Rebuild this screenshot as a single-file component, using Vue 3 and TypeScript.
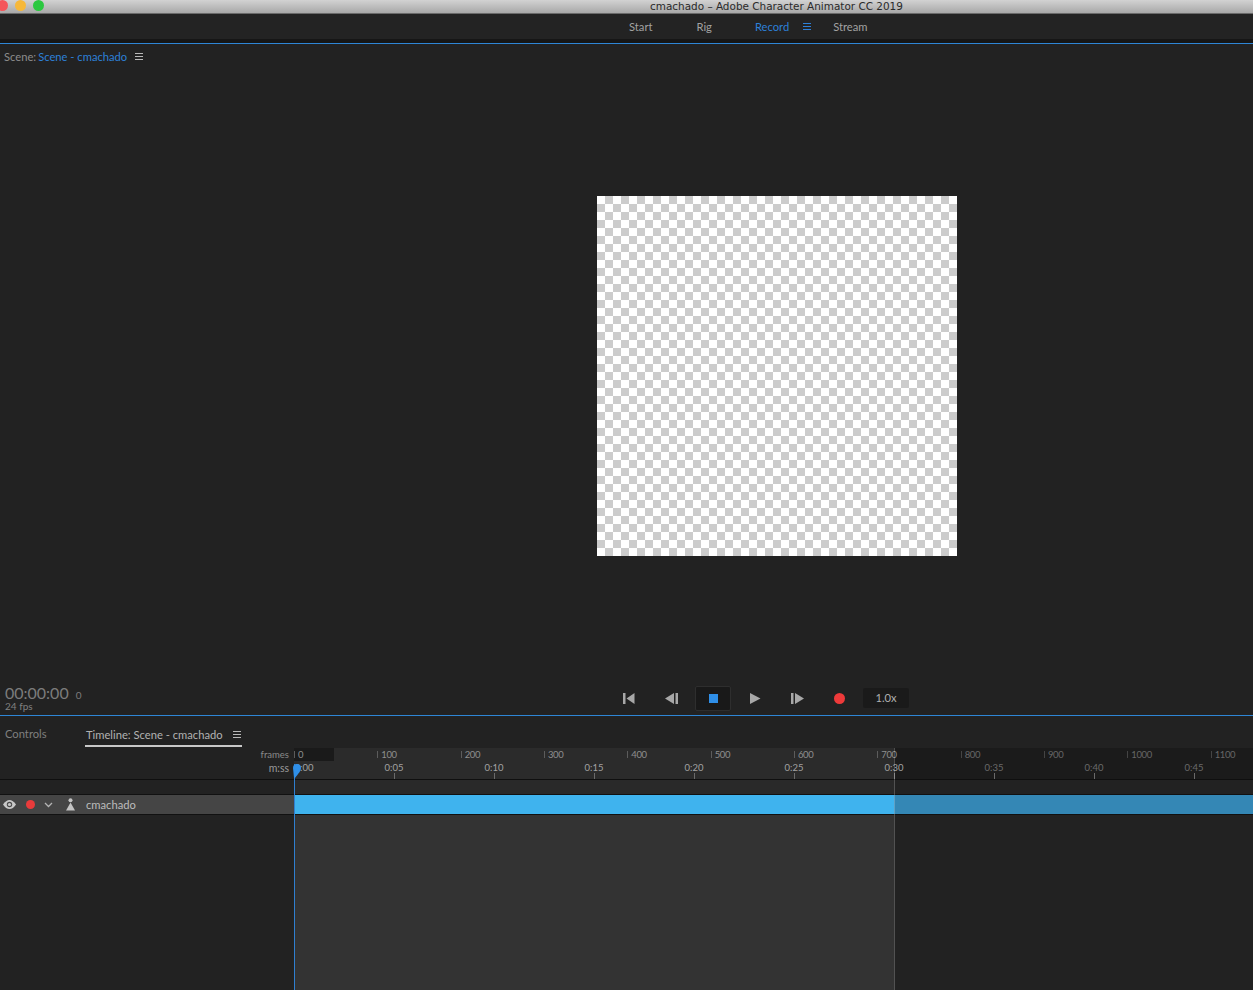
<script setup lang="ts">
import { computed } from 'vue';

const PX_PER_FRAME = 100 / 120;

// frame labels along the top ruler
const frameMarks = computed(() =>
  Array.from({ length: 12 }, (_, i) => ({
    label: String(i * 100),
    left: i * 100 * PX_PER_FRAME,
    dim: i > 7
  }))
);

// m:ss labels, one every 5 seconds
const timeMarks = computed(() =>
  Array.from({ length: 10 }, (_, i) => ({
    label: `0:${String(i * 5).padStart(2, '0')}`,
    left: i * 100,
    dim: i > 6
  }))
);
</script>

<template>
  <div class="app">
    <div class="titlebar">
      <div class="lights">
        <span class="light red"></span>
        <span class="light yellow"></span>
        <span class="light green"></span>
      </div>
      <span class="title">cmachado – Adobe Character Animator CC 2019</span>
    </div>

    <nav class="nav">
      <span class="nav-item start">Start</span>
      <span class="nav-item rig">Rig</span>
      <span class="nav-item record">Record</span>
      <span class="burger blue"><i></i><i></i><i></i></span>
      <span class="nav-item stream">Stream</span>
    </nav>

    <section class="scene">
      <div class="rule"></div>
      <header class="scene-head">
        <span class="scene-label">Scene:</span>
        <span class="scene-name">Scene - cmachado</span>
        <span class="burger"><i></i><i></i><i></i></span>
      </header>
      <div class="stage">
        <div class="checker"></div>
      </div>
      <footer class="transport">
        <div class="clock">
          <div class="clock-line"><span class="timecode">00:00:00</span><span class="frame-no">0</span></div>
          <div class="fps">24 fps</div>
        </div>
        <div class="controls">
          <svg class="ctl first" width="12" height="11" viewBox="0 0 12 11"><path d="M0 0h2.500v11H0zM11.500 0v11L3.500 5.500z" /></svg>
          <svg class="ctl back" width="13" height="11" viewBox="0 0 13 11"><path d="M9 0v11L0 5.500zM10.500 0H13v11h-2.500z" /></svg>
          <button class="stop"><span></span></button>
          <svg class="ctl play" width="11" height="11" viewBox="0 0 11 11"><path d="M0 0v11l10.500-5.500z" /></svg>
          <svg class="ctl fwd" width="13" height="11" viewBox="0 0 13 11"><path d="M0 0h2.500v11H0zM4 0v11l9-5.500z" /></svg>
          <span class="rec-dot"></span>
          <span class="speed">1.0x</span>
        </div>
      </footer>
      <div class="rule"></div>
    </section>

    <section class="timeline">
      <div class="tabs">
        <span class="tab-controls">Controls</span>
        <span class="tab-active">
          <span class="tab-text">Timeline: Scene - cmachado</span>
          <span class="burger"><i></i><i></i><i></i></span>
        </span>
      </div>

      <div class="ruler-row">
        <div class="ruler-names">
          <div>frames</div>
          <div class="mss">m:ss</div>
        </div>
        <div class="ruler">
          <div class="ruler-past"></div>
          <div class="frame-zero"></div>
          <span
            v-for="m in frameMarks"
            :key="m.label"
            class="frame-mark"
            :class="{ dim: m.dim }"
            :style="{ left: `${m.left}px` }"
          >{{ m.label }}</span>
          <span
            v-for="(m, i) in timeMarks"
            :key="m.label"
            class="time-mark"
            :class="{ dim: m.dim, first: i === 0 }"
            :style="{ left: `${m.left}px` }"
          >{{ m.label }}</span>
          <i
            v-for="m in timeMarks.slice(1)"
            :key="m.label"
            class="time-tick"
            :style="{ left: `${m.left}px` }"
          ></i>
        </div>
      </div>

      <div class="spacer-row">
        <div class="spacer-past"></div>
      </div>

      <div class="track-row">
        <div class="track-head">
          <svg width="13" height="9" viewBox="0 0 13 9" class="eye">
            <path d="M0 4.500C2 1.500 4.200 0 6.500 0S11 1.500 13 4.500C11 7.500 8.800 9 6.500 9S2 7.500 0 4.500z" fill="#c8c8c8" />
            <circle cx="6.500" cy="4.500" r="2.700" fill="#4a4a4a" />
            <circle cx="6.500" cy="4.500" r="1.600" fill="#c8c8c8" />
          </svg>
          <span class="track-rec"></span>
          <svg width="9" height="6" viewBox="0 0 9 6" class="chev">
            <path d="M1 1l3.500 3.500L8 1" fill="none" stroke="#b4b4b4" stroke-width="1.300" />
          </svg>
          <svg width="9" height="13" viewBox="0 0 9 13" class="puppet">
            <circle cx="4.500" cy="2.200" r="2" fill="#c4c4c4" />
            <path d="M4.500 4.500L9 12.500H0z" fill="#c4c4c4" />
          </svg>
          <span class="track-name">cmachado</span>
        </div>
        <div class="track-bar">
          <div class="bar-live"></div>
          <div class="bar-rest"></div>
        </div>
      </div>

      <div class="lane">
        <div class="lane-head"></div>
        <div class="lane-past"></div>
        <div class="lane-rest"></div>
      </div>

      <div class="end-line"></div>
      <div class="playhead">
        <svg width="8" height="14" viewBox="0 0 8 14">
          <path d="M0 4a4 4 0 0 1 8 0c0 3-3 6-6 10L1 14z" fill="#2f8fe8" />
        </svg>
      </div>
    </section>
  </div>
</template>

<style scoped>
.app {
  width: 1253px;
  height: 990px;
  display: flex;
  flex-direction: column;
  overflow: hidden;
  background: #222222;
  color: #a0a0a0;
  font-family: Lato, "Open Sans", sans-serif;
  font-size: 11.2px;
}

.titlebar {
  height: 13px;
  flex: none;
  position: relative;
  overflow: hidden;
  background: linear-gradient(#d2d2d2, #a8a8a8);
  border-bottom: 1px solid #6a6a6a;
}

.lights {
  display: flex;
  gap: 7px;
  margin-left: -3px;
}

.light {
  width: 11px;
  height: 11px;
  border-radius: 50%;
}

.red { background: #f5565a; }
.yellow { background: #f6b83a; }
.green { background: #2cc840; }

.title {
  position: absolute;
  left: 650px;
  top: 0;
  color: #2a2a2a;
  font: 10.45px/13px "DejaVu Sans", sans-serif;
  white-space: nowrap;
}

.nav {
  height: 25px;
  flex: none;
  display: flex;
  align-items: center;
  padding-left: 629px;
  background: #232323;
  color: #a2a2a2;
}

.nav-item { line-height: 25px; }
.rig { margin-left: 44px; }
.record { margin-left: 43px; color: #2d80d8; }
.nav .burger { margin-left: 14px; margin-right: 22px; }

.burger {
  display: inline-flex;
  flex-direction: column;
  justify-content: space-between;
  width: 8px;
  height: 7px;
  flex: none;
}

.burger i {
  display: block;
  height: 1px;
  background: #b8b8b8;
}

.burger.blue i { background: #2d80d8; }

.scene {
  height: 677px;
  flex: none;
  display: flex;
  flex-direction: column;
  border-top: 4px solid #161616;
  box-sizing: border-box;
}

.rule {
  height: 1px;
  flex: none;
  background: #2e86d6;
}

.scene-head {
  height: 25px;
  flex: none;
  display: flex;
  align-items: center;
  padding-left: 4px;
  box-sizing: border-box;
}

.scene-label { color: #8c8c8c; }
.scene-name { margin-left: 2px; color: #2d80d8; }
.scene-head .burger { margin-left: 8px; }

.stage {
  flex: 1;
  display: flex;
  padding: 127px 0 0 597px;
}

.checker {
  width: 360px;
  height: 360px;
  background-image: conic-gradient(
    #cccccc 25%, #ffffff 0 50%, #cccccc 0 75%, #ffffff 0
  );
  background-size: 16px 16px;
}

.transport {
  height: 44px;
  flex: none;
  display: flex;
  padding-top: 13px;
  box-sizing: border-box;
}

.clock {
  width: 623px;
  flex: none;
  padding-left: 5px;
  box-sizing: border-box;
}

.clock-line {
  display: flex;
  align-items: baseline;
  height: 17px;
  color: #7c7c7c;
}

.timecode {
  font-size: 16px;
  line-height: 17px;
}

.frame-no {
  margin-left: 7px;
  font-size: 10px;
}

.fps {
  font-size: 10px;
  line-height: 11px;
  color: #808080;
}

.controls {
  display: flex;
  align-items: center;
  height: 24px;
  margin-top: 2px;
}

.ctl { fill: #a8a8a8; flex: none; }
.back { margin-left: 30px; }

.stop {
  width: 36px;
  height: 25px;
  margin-left: 17px;
  padding: 0;
  display: flex;
  align-items: center;
  justify-content: center;
  flex: none;
  background: #191919;
  border: 1px solid #2e2e2e;
  border-radius: 2px;
}

.stop span {
  width: 9px;
  height: 9px;
  background: #2f8fe8;
}

.play { margin-left: 19px; }
.fwd { margin-left: 30px; }

.rec-dot {
  width: 11px;
  height: 11px;
  margin-left: 30px;
  flex: none;
  border-radius: 50%;
  background: #ee3a3a;
}

.speed {
  width: 46px;
  height: 20px;
  margin-left: 18px;
  flex: none;
  line-height: 20px;
  text-align: center;
  background: #1a1a1a;
  color: #b0b0b0;
  border-radius: 2px;
}

.timeline {
  flex: 1;
  position: relative;
  display: flex;
  flex-direction: column;
}

.tabs {
  height: 32px;
  flex: none;
  display: flex;
  align-items: flex-start;
  padding: 7px 0 0 5px;
  box-sizing: border-box;
}

.tab-controls {
  width: 80px;
  line-height: 21px;
  color: #7f7f7f;
}

.tab-active {
  display: flex;
  align-items: center;
  gap: 10px;
  height: 24px;
  width: 157px;
  padding-left: 1px;
  box-sizing: border-box;
  border-bottom: 2px solid #c8c8c8;
  color: #b2b2b2;
  white-space: nowrap;
}

.ruler-row {
  height: 32px;
  flex: none;
  display: flex;
  box-sizing: border-box;
  border-bottom: 1px solid #0f0f0f;
}

.ruler-names {
  width: 294px;
  flex: none;
  box-sizing: border-box;
  padding-right: 5px;
  text-align: right;
  font-size: 9.5px;
  line-height: 13px;
  color: #8a8a8a;
}

.mss { font-size: 10.5px; line-height: 14px; color: #9a9a9a; }

.ruler {
  flex: 1;
  position: relative;
  background: #1b1b1b;
}

.ruler-past {
  position: absolute;
  left: 0;
  top: 0;
  bottom: 0;
  width: 600px;
  background: #2b2b2b;
}

.frame-zero {
  position: absolute;
  left: 0;
  top: 0;
  width: 40px;
  height: 13px;
  background: #1a1a1a;
}

.frame-mark {
  position: absolute;
  top: 3px;
  height: 7px;
  padding-left: 3px;
  border-left: 1px solid #5c5c5c;
  font-size: 9.5px;
  letter-spacing: -0.4px;
  line-height: 7px;
  color: #8e8e8e;
}

.frame-mark.dim { color: #666666; border-color: #444444; }

.time-mark {
  position: absolute;
  top: 13px;
  transform: translateX(-50%);
  font-size: 9.5px;
  line-height: 13px;
  color: #a2a2a2;
}

.time-mark.dim { color: #6a6a6a; }
.time-mark.first { margin-left: 10px; }

.time-tick {
  position: absolute;
  bottom: 0;
  width: 1px;
  height: 6px;
  background: #6a6a6a;
}

.spacer-row {
  height: 14px;
  flex: none;
  display: flex;
}

.spacer-past {
  width: 600px;
  flex: none;
  margin-left: 294px;
  background: #292929;
}

.track-row {
  height: 21px;
  flex: none;
  display: flex;
  border-top: 1px solid #111111;
  border-bottom: 1px solid #111111;
  box-sizing: border-box;
}

.track-head {
  width: 294px;
  flex: none;
  display: flex;
  align-items: center;
  padding-left: 3px;
  box-sizing: border-box;
  background: #454545;
}

.eye { flex: none; }

.track-rec {
  width: 9px;
  height: 9px;
  margin-left: 10px;
  flex: none;
  border-radius: 50%;
  background: #e93b3b;
}

.chev { margin-left: 9px; flex: none; }
.puppet { margin-left: 13px; flex: none; }

.track-name {
  margin-left: 11px;
  color: #bcbcbc;
}

.track-bar {
  flex: 1;
  display: flex;
}

.bar-live {
  width: 600px;
  flex: none;
  background: #3fb3ee;
}

.bar-rest {
  flex: 1;
  background: #3487b5;
}

.lane {
  flex: 1;
  display: flex;
}

.lane-head {
  width: 294px;
  flex: none;
}

.lane-past {
  width: 600px;
  flex: none;
  background: #333333;
}

.lane-rest {
  flex: 1;
}

.end-line {
  position: absolute;
  left: 894px;
  top: 32px;
  bottom: 0;
  width: 1px;
  background: rgba(255, 255, 255, 0.22);
}

.playhead {
  position: absolute;
  left: 294px;
  top: 48px;
  bottom: 0;
  width: 1px;
  background: #2f7fd0;
}

.playhead svg {
  position: absolute;
  left: -1px;
  top: 0;
}
</style>
